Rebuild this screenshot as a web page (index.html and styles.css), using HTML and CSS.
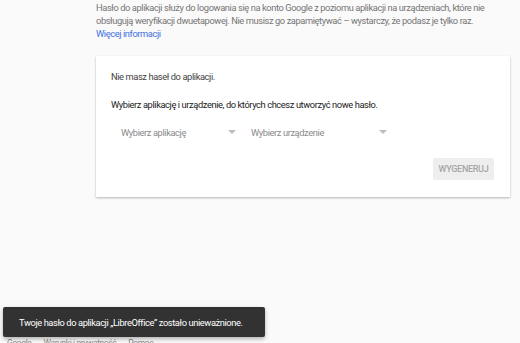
FILE: index.html
```html
<!DOCTYPE html>
<html lang="pl">
<head>
    <meta charset="UTF-8">
    <meta name="viewport" content="width=device-width, initial-scale=1.0">
    <title>Hasła do aplikacji</title>
    <link rel="stylesheet" href="styles.css">
</head>
<body>
    <div class="main">
        <!-- Intro -->
        <p class="intro">
            Hasło do aplikacji służy do logowania się na konto Google z poziomu aplikacji na urządzeniach, które nie obsługują weryfikacji dwuetapowej. Nie musisz go zapamiętywać – wystarczy, że podasz je tylko raz.
            <br><a href="#" class="link">Więcej informacji</a>
        </p>

        <!-- App passwords card -->
        <div class="card">
            <p class="empty">Nie masz haseł do aplikacji.</p>
            <p class="lead">Wybierz aplikację i urządzenie, do których chcesz utworzyć nowe hasło.</p>

            <div class="selects">
                <div class="select select-app">
                    <span>Wybierz aplikację</span>
                    <span class="arrow"></span>
                </div>
                <div class="select select-device">
                    <span>Wybierz urządzenie</span>
                    <span class="arrow"></span>
                </div>
            </div>

            <div class="actions">
                <button type="button" class="gen-btn" disabled>Wygeneruj</button>
            </div>
        </div>
    </div>

    <div class="footer">
        <a href="#">Google</a>
        <a href="#">Warunki i prywatność</a>
        <a href="#">Pomoc</a>
    </div>

    <!-- Snackbar -->
    <div class="snackbar">Twoje hasło do aplikacji „LibreOffice” zostało unieważnione.</div>
</body>
</html>
```

FILE: styles.css
```css
html, body { margin: 0; padding: 0; }
body { background: #fafafa; font-family: Roboto, "Liberation Sans", Arial, sans-serif; font-size: 9.3px; letter-spacing: -0.4px; color: #757575; position: relative; height: 343px; overflow: hidden; }
p { margin: 0; }

.main { margin-left: 96px; width: 414px; }
.intro { padding-top: 1px; line-height: 13px; width: 412px; }
.link { color: #3f6fe0; text-decoration: none; }

.card { margin-top: 16px; background: #fff; box-shadow: 0 1px 2px rgba(0,0,0,.28); padding: 14px 15px 17px 15px; }
.empty { color: #424242; line-height: 13px; }
.lead { color: #212121; margin-top: 15px; line-height: 13px; }

.selects { display: flex; margin-top: 7px; height: 28px; align-items: center; }
.select { display: flex; align-items: center; justify-content: space-between; padding: 0 5px 0 10px; color: #8a8a8a; }
.select-app { width: 115px; }
.select-device { width: 136px; }
.arrow { width: 0; height: 0; border-left: 4px solid transparent; border-right: 4px solid transparent; border-top: 4px solid #bdbdbd; }

.actions { display: flex; justify-content: flex-end; margin-top: 12px; padding-right: 1px; }
.gen-btn { background: #eeeeee; border: none; border-radius: 2px; color: #a6a6a6; font-family: inherit; font-size: 9px; letter-spacing: -0.3px; font-weight: 500; text-transform: uppercase; height: 22px; padding: 0; width: 61px; }

.footer { margin-top: 141px; margin-left: 7px; display: flex; gap: 12px; font-size: 8.5px; }
.footer a { color: #8a8a8a; text-decoration: none; }

.snackbar { position: absolute; left: 3px; top: 307px; width: 262px; height: 30px; box-sizing: border-box; background: #323232; color: #fff; display: flex; align-items: center; padding-left: 16px; box-shadow: 0 2px 4px rgba(0,0,0,.3); border-radius: 2px; }
```
